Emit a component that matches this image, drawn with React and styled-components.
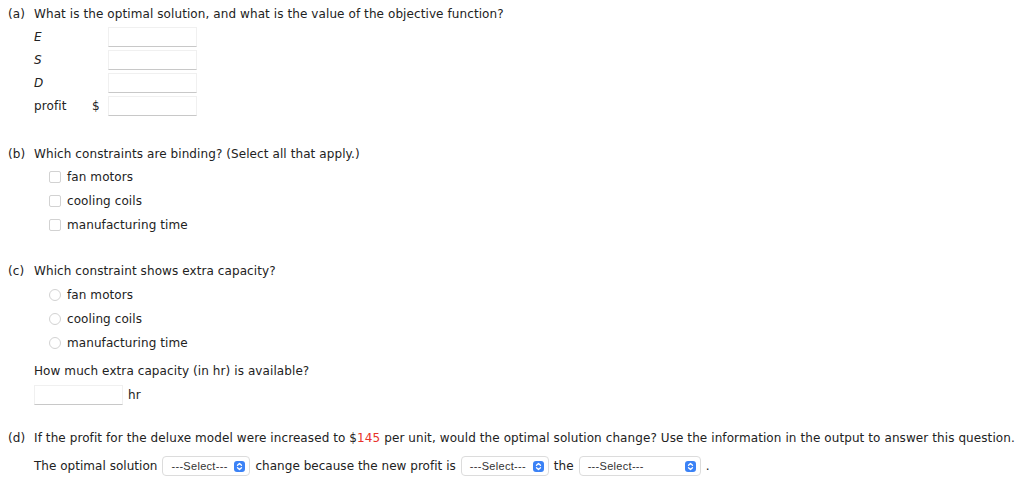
import React from 'react'
import styled, { createGlobalStyle } from 'styled-components'

const Global = createGlobalStyle`
  body {
    margin: 0;
    background: #fff;
    color: #222;
    font-family: "DejaVu Sans", Verdana, sans-serif;
    font-size: 12px;
    letter-spacing: 0.09px;
  }
`

const Page = styled.div`
  padding: 6px 8px 0 8px;
`

const Part = styled.section`
  display: grid;
  grid-template-columns: 26px 1fr;
  margin-bottom: ${p => p.gap || 0}px;
`

const Letter = styled.div`
  line-height: 16px;
`

const Body = styled.div`
  display: flex;
  flex-direction: column;
`

const Prompt = styled.div`
  line-height: 16px;
  margin-top: ${p => p.before || 0}px;
  margin-bottom: ${p => p.after || 0}px;
`

const VarGrid = styled.div`
  display: grid;
  grid-template-columns: 58px 16px 89px;
  row-gap: 3px;
  align-items: center;
`

const VarName = styled.span`
  font-style: ${p => (p.italic ? 'italic' : 'normal')};
`

const Field = styled.div`
  width: ${p => p.w || 89}px;
  height: 20px;
  box-sizing: border-box;
  border: 1px solid #f0f0f0;
  border-bottom: 1px solid #c8c8c8;
  background: #fff;
`

const Options = styled.div`
  display: flex;
  flex-direction: column;
  gap: 8px;
  padding-left: 15px;
`

const Option = styled.label`
  display: flex;
  align-items: center;
  gap: 6px;
  line-height: 16px;
`

const Box = styled.span`
  width: 10px;
  height: 10px;
  border: 1px solid #d2d2d2;
  border-radius: ${p => (p.round ? '50%' : '2px')};
  background: #fff;
`

const Inline = styled.div`
  display: flex;
  align-items: center;
  gap: ${p => p.gap || 5}px;
  letter-spacing: ${p => p.tight ? '0.03px' : 'inherit'};
`

const Red = styled.span`
  color: #e8322a;
`

const SelectBox = styled.div`
  display: inline-flex;
  align-items: center;
  justify-content: space-between;
  box-sizing: border-box;
  width: ${p => p.w}px;
  height: 20px;
  padding: 0 4px 0 8px;
  border: 1px solid #dcdcdc;
  border-radius: 4px;
  font-family: "Liberation Sans", Arial, sans-serif;
  font-size: 11px;
  letter-spacing: 0.3px;
  color: #333;
  background: #fff;
`

const Chevrons = styled.span`
  width: 11px;
  height: 11px;
  border-radius: 3px;
  background: #3b82f6;
  display: inline-flex;
  align-items: center;
  justify-content: center;
`

const Select = ({ w }) => (
  <SelectBox w={w}>
    <span>---Select---</span>
    <Chevrons>
      <svg width="7" height="9" viewBox="0 0 7 9" fill="none" stroke="#fff" strokeWidth="1.3" strokeLinecap="round" strokeLinejoin="round">
        <path d="M1.5 3.2 L3.5 1.4 L5.5 3.2" />
        <path d="M1.5 5.8 L3.5 7.6 L5.5 5.8" />
      </svg>
    </Chevrons>
  </SelectBox>
)

const items = ['fan motors', 'cooling coils', 'manufacturing time']

export default function App() {
  return (
    <Page>
      <Global />
      <Part gap={30}>
        <Letter>(a)</Letter>
        <Body>
          <Prompt after={5}>What is the optimal solution, and what is the value of the objective function?</Prompt>
          <VarGrid>
            <VarName italic>E</VarName><span /><Field />
            <VarName italic>S</VarName><span /><Field />
            <VarName italic>D</VarName><span /><Field />
            <VarName>profit</VarName><span>$</span><Field />
          </VarGrid>
        </Body>
      </Part>

      <Part gap={30}>
        <Letter>(b)</Letter>
        <Body>
          <Prompt after={7}>Which constraints are binding? (Select all that apply.)</Prompt>
          <Options>
            {items.map(t => (
              <Option key={t}><Box />{t}</Option>
            ))}
          </Options>
        </Body>
      </Part>

      <Part gap={25}>
        <Letter>(c)</Letter>
        <Body>
          <Prompt after={8}>Which constraint shows extra capacity?</Prompt>
          <Options>
            {items.map(t => (
              <Option key={t}><Box round />{t}</Option>
            ))}
          </Options>
          <Prompt before={12} after={6}>How much extra capacity (in hr) is available?</Prompt>
          <Inline>
            <Field w={89} />
            <span>hr</span>
          </Inline>
        </Body>
      </Part>

      <Part>
        <Letter>(d)</Letter>
        <Body>
          <Prompt after={10}>
            If the profit for the deluxe model were increased to $<Red>145</Red> per unit, would the optimal solution change? Use the information in the output to answer this question.
          </Prompt>
          <Inline gap={5} tight>
            <span>The optimal solution</span>
            <Select w={88} />
            <span>change because the new profit is</span>
            <Select w={88} />
            <span>the</span>
            <Select w={122} />
            <span>.</span>
          </Inline>
        </Body>
      </Part>
    </Page>
  )
}
